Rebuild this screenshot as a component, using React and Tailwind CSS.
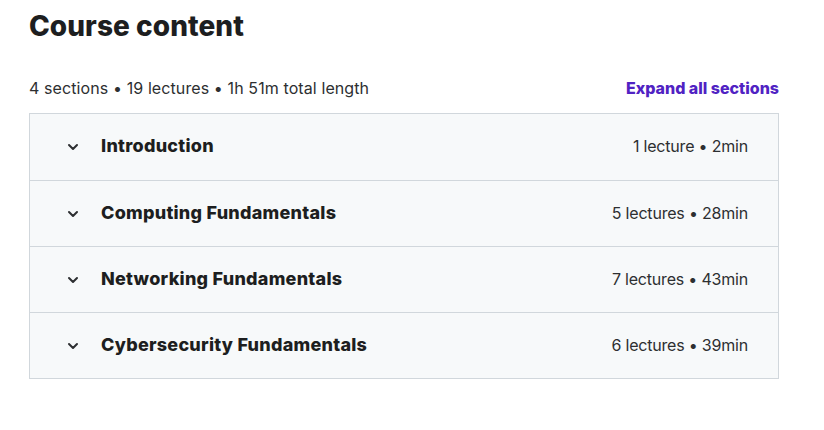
import React from 'react';

const sections = [
    { title: 'Introduction', meta: '1 lecture • 2min' },
    { title: 'Computing Fundamentals', meta: '5 lectures • 28min' },
    { title: 'Networking Fundamentals', meta: '7 lectures • 43min' },
    { title: 'Cybersecurity Fundamentals', meta: '6 lectures • 39min' },
];

function Chevron() {
    return (
        <svg width="14" height="14" viewBox="0 0 14 14" fill="none" className="shrink-0">
            <path d="M3 5l4 4 4-4" stroke="#2d2f31" strokeWidth="2" strokeLinecap="round" strokeLinejoin="round" />
        </svg>
    );
}

export default function App() {
    return (
        <div className="bg-white w-[824px] h-[430px] pl-[29px] pr-[45px] pt-[8px]" style={{ fontFamily: 'Inter, "Noto Sans", sans-serif' }}>
            <h2 className="text-[28px] leading-[36px] font-extrabold tracking-[0.05px] text-[#1d1e20]">Course content</h2>
            <div className="flex items-center justify-between mt-[32px] mb-[13px]">
                <span className="text-[16px] tracking-[0.1px] text-[#2d2f31]">4 sections • 19 lectures • 1h 51m total length</span>
                <button className="text-[16px] font-extrabold text-[#5022c3]">Expand all sections</button>
            </div>
            <div className="border border-[#d1d7dc]">
                {sections.map((s, i) => (
                    <div
                        key={i}
                        className={`flex items-center justify-between h-[66px] bg-[#f7f9fa] pl-[36px] pr-[30px] ${i > 0 ? 'border-t border-[#d1d7dc]' : ''}`}
                    >
                        <div className="flex items-center gap-[21px]">
                            <Chevron />
                            <span className="text-[18px] leading-[24px] -mt-[2px] font-extrabold tracking-[0.25px] text-[#1d1e20]">{s.title}</span>
                        </div>
                        <span className="text-[16px] leading-[24px] -mt-[2px] tracking-[-0.2px] text-[#2d2f31]">{s.meta}</span>
                    </div>
                ))}
            </div>
        </div>
    );
}
